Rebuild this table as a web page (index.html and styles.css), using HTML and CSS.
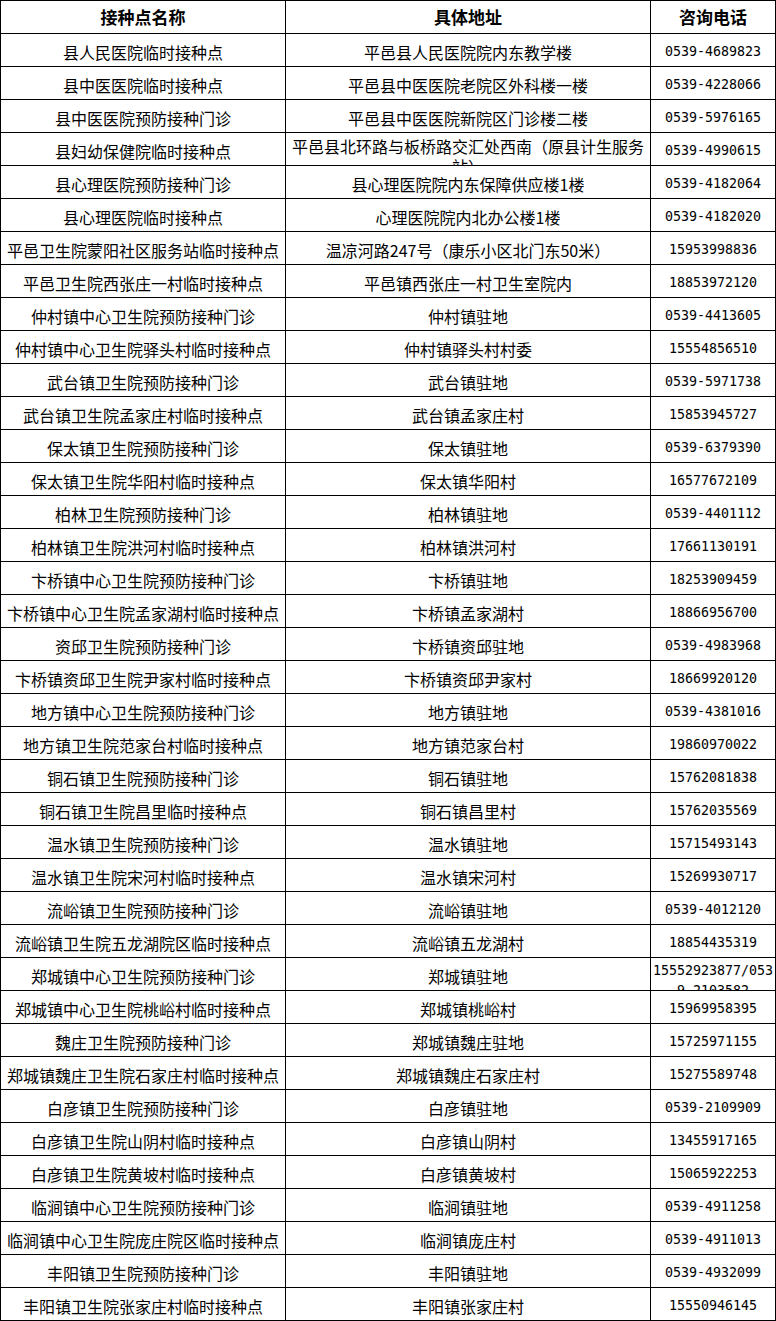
FILE: index.html
```html
<!DOCTYPE html>
<html lang="zh-CN">
<head>
<meta charset="utf-8">
<title>接种点</title>
<link rel="stylesheet" href="styles.css">
</head>
<body>
<div class="sheet">
  <div class="c h">接种点名称</div><div class="c h">具体地址</div><div class="c h">咨询电话</div>
  <div class="c">县人民医院临时接种点</div><div class="c">平邑县人民医院院内东教学楼</div><div class="c n">0539-4689823</div>
  <div class="c">县中医医院临时接种点</div><div class="c">平邑县中医医院老院区外科楼一楼</div><div class="c n">0539-4228066</div>
  <div class="c">县中医医院预防接种门诊</div><div class="c">平邑县中医医院新院区门诊楼二楼</div><div class="c n">0539-5976165</div>
  <div class="c">县妇幼保健院临时接种点</div><div class="c"><span>平邑县北环路与板桥路交汇处西南（原县计生服务站）</span></div><div class="c n">0539-4990615</div>
  <div class="c">县心理医院预防接种门诊</div><div class="c">县心理医院院内东保障供应楼1楼</div><div class="c n">0539-4182064</div>
  <div class="c">县心理医院临时接种点</div><div class="c">心理医院院内北办公楼1楼</div><div class="c n">0539-4182020</div>
  <div class="c">平邑卫生院蒙阳社区服务站临时接种点</div><div class="c">温凉河路247号（康乐小区北门东50米）</div><div class="c n">15953998836</div>
  <div class="c">平邑卫生院西张庄一村临时接种点</div><div class="c">平邑镇西张庄一村卫生室院内</div><div class="c n">18853972120</div>
  <div class="c">仲村镇中心卫生院预防接种门诊</div><div class="c">仲村镇驻地</div><div class="c n">0539-4413605</div>
  <div class="c">仲村镇中心卫生院驿头村临时接种点</div><div class="c">仲村镇驿头村村委</div><div class="c n">15554856510</div>
  <div class="c">武台镇卫生院预防接种门诊</div><div class="c">武台镇驻地</div><div class="c n">0539-5971738</div>
  <div class="c">武台镇卫生院孟家庄村临时接种点</div><div class="c">武台镇孟家庄村</div><div class="c n">15853945727</div>
  <div class="c">保太镇卫生院预防接种门诊</div><div class="c">保太镇驻地</div><div class="c n">0539-6379390</div>
  <div class="c">保太镇卫生院华阳村临时接种点</div><div class="c">保太镇华阳村</div><div class="c n">16577672109</div>
  <div class="c">柏林卫生院预防接种门诊</div><div class="c">柏林镇驻地</div><div class="c n">0539-4401112</div>
  <div class="c">柏林镇卫生院洪河村临时接种点</div><div class="c">柏林镇洪河村</div><div class="c n">17661130191</div>
  <div class="c">卞桥镇中心卫生院预防接种门诊</div><div class="c">卞桥镇驻地</div><div class="c n">18253909459</div>
  <div class="c">卞桥镇中心卫生院孟家湖村临时接种点</div><div class="c">卞桥镇孟家湖村</div><div class="c n">18866956700</div>
  <div class="c">资邱卫生院预防接种门诊</div><div class="c">卞桥镇资邱驻地</div><div class="c n">0539-4983968</div>
  <div class="c">卞桥镇资邱卫生院尹家村临时接种点</div><div class="c">卞桥镇资邱尹家村</div><div class="c n">18669920120</div>
  <div class="c">地方镇中心卫生院预防接种门诊</div><div class="c">地方镇驻地</div><div class="c n">0539-4381016</div>
  <div class="c">地方镇卫生院范家台村临时接种点</div><div class="c">地方镇范家台村</div><div class="c n">19860970022</div>
  <div class="c">铜石镇卫生院预防接种门诊</div><div class="c">铜石镇驻地</div><div class="c n">15762081838</div>
  <div class="c">铜石镇卫生院昌里临时接种点</div><div class="c">铜石镇昌里村</div><div class="c n">15762035569</div>
  <div class="c">温水镇卫生院预防接种门诊</div><div class="c">温水镇驻地</div><div class="c n">15715493143</div>
  <div class="c">温水镇卫生院宋河村临时接种点</div><div class="c">温水镇宋河村</div><div class="c n">15269930717</div>
  <div class="c">流峪镇卫生院预防接种门诊</div><div class="c">流峪镇驻地</div><div class="c n">0539-4012120</div>
  <div class="c">流峪镇卫生院五龙湖院区临时接种点</div><div class="c">流峪镇五龙湖村</div><div class="c n">18854435319</div>
  <div class="c">郑城镇中心卫生院预防接种门诊</div><div class="c">郑城镇驻地</div><div class="c n"><span>15552923877/0539-2103582</span></div>
  <div class="c">郑城镇中心卫生院桃峪村临时接种点</div><div class="c">郑城镇桃峪村</div><div class="c n">15969958395</div>
  <div class="c">魏庄卫生院预防接种门诊</div><div class="c">郑城镇魏庄驻地</div><div class="c n">15725971155</div>
  <div class="c">郑城镇魏庄卫生院石家庄村临时接种点</div><div class="c">郑城镇魏庄石家庄村</div><div class="c n">15275589748</div>
  <div class="c">白彦镇卫生院预防接种门诊</div><div class="c">白彦镇驻地</div><div class="c n">0539-2109909</div>
  <div class="c">白彦镇卫生院山阴村临时接种点</div><div class="c">白彦镇山阴村</div><div class="c n">13455917165</div>
  <div class="c">白彦镇卫生院黄坡村临时接种点</div><div class="c">白彦镇黄坡村</div><div class="c n">15065922253</div>
  <div class="c">临涧镇中心卫生院预防接种门诊</div><div class="c">临涧镇驻地</div><div class="c n">0539-4911258</div>
  <div class="c">临涧镇中心卫生院庞庄院区临时接种点</div><div class="c">临涧镇庞庄村</div><div class="c n">0539-4911013</div>
  <div class="c">丰阳镇卫生院预防接种门诊</div><div class="c">丰阳镇驻地</div><div class="c n">0539-4932099</div>
  <div class="c">丰阳镇卫生院张家庄村临时接种点</div><div class="c">丰阳镇张家庄村</div><div class="c n">15550946145</div>
</div>
</body>
</html>
```

FILE: styles.css
```css
html, body {
  margin: 0;
  padding: 0;
  background: #ffffff;
}

.sheet {
  display: grid;
  grid-template-columns: 284px 364px 124px;
  grid-auto-rows: 32px;
  gap: 1px;
  padding: 1px;
  width: 774px;
  background: #000000;
  font-family: "Noto Sans CJK SC", "Noto Sans", sans-serif;
  font-size: 16px;
  line-height: 20px;
  color: #000000;
}

.c {
  background: #ffffff;
  overflow: hidden;
  display: flex;
  align-items: safe center;
  justify-content: center;
  text-align: center;
  padding: 3px 1px 0;
  box-sizing: border-box;
  white-space: normal;
  word-break: break-all;
}

.h {
  font-weight: 700;
  font-size: 17px;
  padding-top: 0;
}

.n {
  font-family: "DejaVu Sans Mono", "Liberation Mono", monospace;
  font-size: 13.3px;
}
```
